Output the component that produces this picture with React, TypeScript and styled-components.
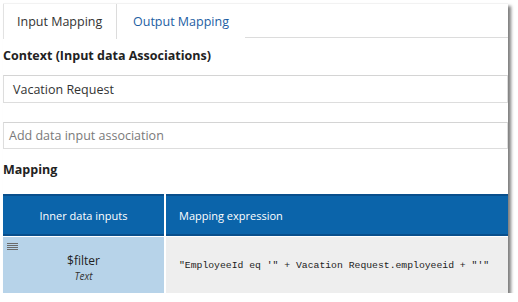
import styled, { createGlobalStyle } from "styled-components";

const Global = createGlobalStyle`
  body {
    margin: 0;
    background: #fff;
    font-family: "Open Sans", "Liberation Sans", sans-serif;
  }
`;

const Frame = styled.div`
  padding: 3px 0 0 3px;
`;

const Panel = styled.div`
  width: 505px;
  height: 290px;
  background: #fff;
  box-shadow: 3px 3px 3px rgba(0, 0, 0, 0.5);
  border-top: 1px solid #f2f2f2;
  box-sizing: border-box;
  display: flex;
  flex-direction: column;
`;

const TabBar = styled.div`
  display: flex;
  height: 34px;
  border-bottom: 1px solid #dcdcdc;
  box-sizing: border-box;
`;

const Tab = styled.div<{ $active?: boolean }>`
  display: flex;
  align-items: center;
  white-space: nowrap;
  padding: 0 ${(p) => (p.$active ? "13px" : "16px")};
  font-size: 12.5px;
  color: ${(p) => (p.$active ? "#333" : "#1d5ea3")};
  background: #fff;
  box-sizing: border-box;
  height: 34px;
  ${(p) =>
    p.$active &&
    `
    border-left: 1px solid #e2e2e2;
    border-right: 1px solid #dcdcdc;
    margin-bottom: -1px;
    height: 35px;
    width: 114px;
  `}
`;

const Heading = styled.div<{ $top: number }>`
  margin-top: ${(p) => p.$top}px;
  font-size: 12.5px;
  font-weight: 700;
  color: #222;
  line-height: 18px;
`;

const Field = styled.div<{ $top: number; $h: number; $placeholder?: boolean }>`
  margin-top: ${(p) => p.$top}px;
  height: ${(p) => p.$h}px;
  border: 1px solid #dddddd;
  border-top-color: #d4d4d4;
  box-sizing: border-box;
  display: flex;
  align-items: center;
  padding-left: ${(p) => (p.$placeholder ? "5px" : "9px")};
  font-size: 12.5px;
  color: ${(p) => (p.$placeholder ? "#7a7a7a" : "#333")};
`;

const Grid = styled.div`
  margin-top: 15px;
  display: grid;
  grid-template-columns: 161px 1fr;
  grid-template-rows: 42px 56px;
  column-gap: 2px;
  row-gap: 1px;
`;

const HeadCell = styled.div<{ $center?: boolean }>`
  background: #0b64aa;
  border-top: 2px solid #094f8c;
  border-bottom: 2px solid #094f8c;
  box-sizing: border-box;
  color: #fff;
  font-size: 11px;
  display: flex;
  align-items: center;
  justify-content: ${(p) => (p.$center ? "center" : "flex-start")};
  padding-left: ${(p) => (p.$center ? "0" : "13px")};
`;

const NameCell = styled.div`
  background: #b7d3e9;
  position: relative;
  display: flex;
  flex-direction: column;
  align-items: center;
  justify-content: center;
  padding-top: 6px;
  box-sizing: border-box;
`;

const Grip = styled.div`
  position: absolute;
  left: 4px;
  top: 6px;
  width: 11px;
  display: flex;
  flex-direction: column;
  gap: 1px;
  span {
    height: 1px;
    background: #6a6a6a;
  }
`;

const VarName = styled.div`
  font-size: 12px;
  color: #222;
  line-height: 16px;
`;

const VarType = styled.div`
  font-size: 10px;
  font-style: italic;
  color: #333;
  line-height: 14px;
`;

const ExprCell = styled.div`
  background: #eeeeee;
  display: flex;
  align-items: center;
  padding-left: 13px;
  font-family: "Liberation Mono", "DejaVu Sans Mono", monospace;
  font-size: 9.75px;
  color: #222;
  white-space: pre;
`;

export default function App() {
  return (
    <Frame>
      <Global />
      <Panel>
        <TabBar>
          <Tab $active>Input Mapping</Tab>
          <Tab>Output Mapping</Tab>
        </TabBar>
        <Heading $top={9}>Context (Input data Associations)</Heading>
        <Field $top={10} $h={31}>Vacation Request</Field>
        <Field $top={19} $h={29} $placeholder>
          Add data input association
        </Field>
        <Heading $top={12}>Mapping</Heading>
        <Grid>
          <HeadCell $center>Inner data inputs</HeadCell>
          <HeadCell>Mapping expression</HeadCell>
          <NameCell>
            <Grip>
              <span />
              <span />
              <span />
              <span />
            </Grip>
            <VarName>$filter</VarName>
            <VarType>Text</VarType>
          </NameCell>
          <ExprCell>{`"EmployeeId eq '" + Vacation Request.employeeid + "'"`}</ExprCell>
        </Grid>
      </Panel>
    </Frame>
  );
}
